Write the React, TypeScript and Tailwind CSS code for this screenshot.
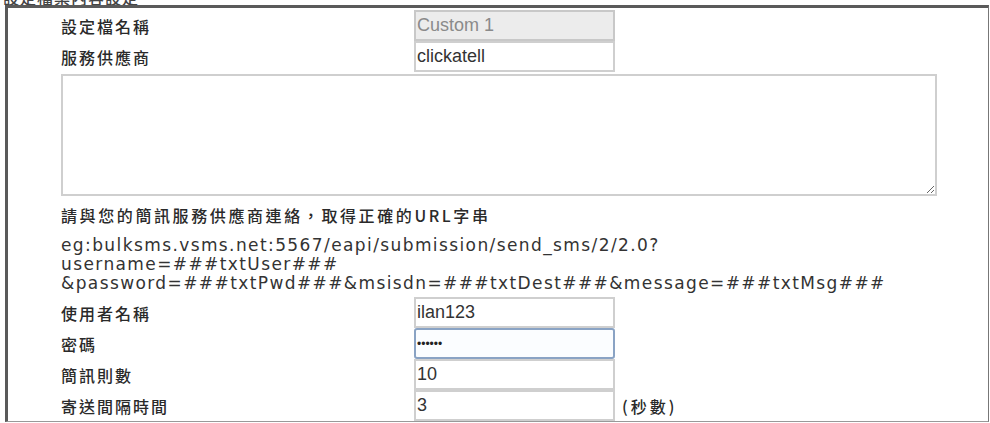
import React from "react";

const cjk = "font-['Noto_Sans_CJK_TC','Noto_Sans_CJK_SC',sans-serif]";

function Row({ label, children }: { label: string; children: React.ReactNode }) {
  return (
    <div className="flex items-center h-[31px]">
      <div className={`w-[353px] text-[16px] font-medium tracking-[2px] text-[#2a2a2a] ${cjk}`}>{label}</div>
      {children}
    </div>
  );
}

function Field({ value, disabled }: { value: string; disabled?: boolean }) {
  const base =
    "w-[201px] h-[31px] px-[1px] text-[18px] font-['Liberation_Sans',Arial,sans-serif] outline-none ";
  const look = disabled
    ? "bg-[#ececec] text-[#8a8a8a] border-2 border-[#c8c8c8]"
    : "bg-white text-[#333] border-2 border-[#cfcfcf]";
  return <input readOnly value={value} className={base + look} />;
}

export default function App() {
  return (
    <div className="w-[990px] h-[423px] bg-white overflow-hidden relative">
      <div className="h-[5px] overflow-hidden pl-[3px]">
        <div className={`-mt-[15px] text-[16px] font-medium tracking-[1px] text-[#444] ${cjk}`}>設定檔案內容設定</div>
      </div>
      <div className="ml-[5px] w-[984px] h-[417px] border-t-[3px] border-l-[3px] border-t-[#5a5a5a] border-l-[#5a5a5a] border-r border-r-[#777] border-b border-b-[#999]">
        <div className="pl-[53px] pt-[2px]">
          <Row label="設定檔名稱">
            <Field value="Custom 1" disabled />
          </Row>
          <Row label="服務供應商">
            <Field value="clickatell" />
          </Row>
          <div className="pt-[2px] pb-[3px]">
            <textarea
              readOnly
              className="block w-[876px] h-[122px] border-2 border-[#cfcfcf] bg-white outline-none"
            />
          </div>
          <div className={`pt-[4px] text-[16px] font-medium tracking-[2.6px] leading-[24px] text-[#2a2a2a] ${cjk}`}>
            請與您的簡訊服務供應商連絡，取得正確的URL字串
          </div>
          <div className="text-[17px] tracking-[1.4px] leading-[19px] text-[#333] font-['DejaVu_Sans',Verdana,sans-serif] pt-[9px] pb-[4px]">
            <div>eg:bulksms.vsms.net:5567/eapi/submission/send_sms/2/2.0?</div>
            <div>username=###txtUser###</div>
            <div>&amp;password=###txtPwd###&amp;msisdn=###txtDest###&amp;message=###txtMsg###</div>
          </div>
          <Row label="使用者名稱">
            <Field value="ilan123" />
          </Row>
          <Row label="密碼">
            <input
              readOnly
              type="password"
              value="123456"
              className="w-[201px] h-[31px] px-[1px] text-[12px] bg-[#fbfdff] text-[#222] border-2 border-[#8aa3c4] rounded-[3px] outline-none font-['Liberation_Sans',Arial,sans-serif]"
            />
          </Row>
          <Row label="簡訊則數">
            <Field value="10" />
          </Row>
          <Row label="寄送間隔時間">
            <Field value="3" />
            <span className={`ml-[7px] text-[16px] font-medium tracking-[3px] text-[#2a2a2a] ${cjk}`}>(秒數)</span>
          </Row>
        </div>
      </div>
    </div>
  );
}
